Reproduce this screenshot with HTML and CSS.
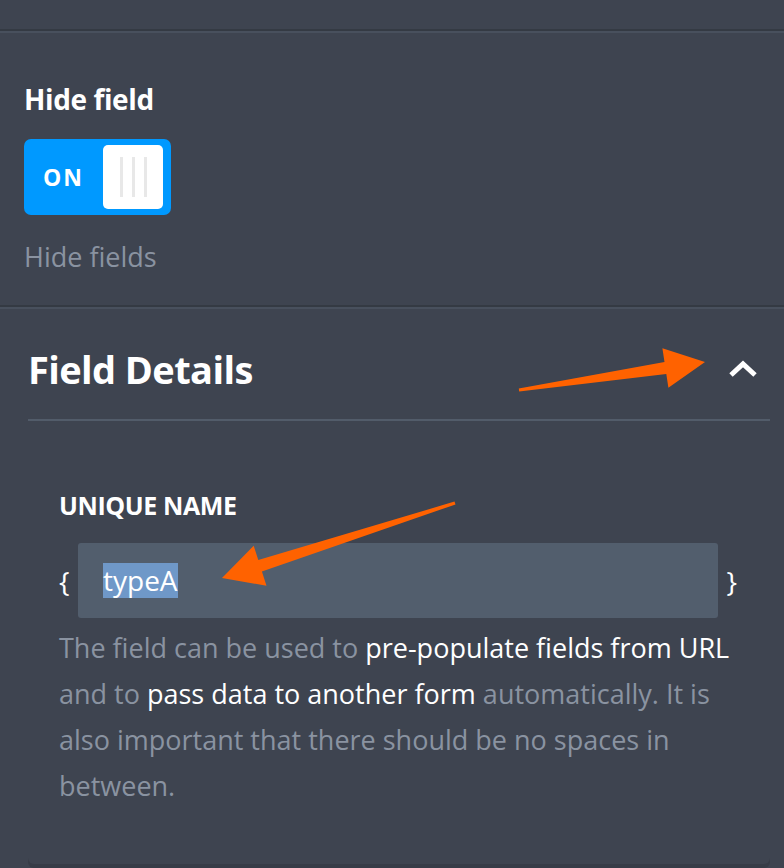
FILE: index.html
```html
<!DOCTYPE html>
<html lang="en">
<head>
    <meta charset="UTF-8">
    <meta name="viewport" content="width=device-width, initial-scale=1.0">
    <title>Field properties</title>
    <link rel="stylesheet" href="styles.css">
</head>
<body>
    <div class="top-strip"></div>
    <div class="divider"></div>

    <div class="section hide-section">
        <h3 class="section-label">Hide field</h3>
        <div class="toggle">
            <span class="toggle-text">ON</span>
            <span class="toggle-knob">
                <i></i><i></i><i></i>
            </span>
        </div>
        <p class="hint">Hide fields</p>
    </div>

    <div class="divider"></div>

    <div class="details">
        <div class="details-head">
            <h2>Field Details</h2>
            <svg class="chevron" width="34" height="22" viewBox="0 0 34 22">
                <polyline points="5,17 17,6 29,17" fill="none" stroke="#fff" stroke-width="5"/>
            </svg>
        </div>
        <div class="details-body">
            <label class="field-label" for="uniqueName">UNIQUE NAME</label>
            <div class="name-row">
                <span class="brace">{</span>
                <div class="name-input" id="uniqueName"><span class="selected">typeA</span></div>
                <span class="brace">}</span>
            </div>
            <p class="desc">
                The field can be used to <b>pre-populate fields from URL</b>
                and to <b>pass data to another form</b> automatically. It is
                also important that there should be no spaces in between.
            </p>
        </div>
    </div>

    <svg class="arrows" width="784" height="868" viewBox="0 0 784 868">
        <polygon fill="#ff6200" points="518.8,388.5 664.5,362.1 662.4,348.2 705,362 668.4,387.8 666.3,373.9 519.2,391.5"/>
        <polygon fill="#ff6200" points="454.5,501.6 258.3,560.1 253.7,545.8 222,578 266.5,585.8 261.9,571.5 455.5,504.4"/>
    </svg>
</body>
</html>
```

FILE: styles.css
```css
body {
    margin: 0;
    background-color: #3e4450;
    font-family: "Open Sans", Lato, Arial, sans-serif;
    color: #fff;
    position: relative;
    height: 868px;
    overflow: hidden;
}
.top-strip {
    height: 29px;
}
.divider {
    border-top: 2px solid #343a43;
    border-bottom: 2px solid #48505d;
}
.hide-section {
    padding: 49px 24px 31px;
}
.section-label {
    margin: 0;
    font-size: 28px;
    font-weight: 700;
    line-height: 34px;
    letter-spacing: -0.4px;
}
.toggle {
    margin-top: 23px;
    width: 147px;
    height: 76px;
    box-sizing: border-box;
    background-color: #0099ff;
    border-radius: 7px;
    display: flex;
    align-items: center;
    justify-content: space-between;
    padding: 6px 8px 6px 19px;
}
.toggle-text {
    font-size: 23px;
    font-weight: 700;
    letter-spacing: 2px;
}
.toggle-knob {
    width: 60px;
    height: 64px;
    background-color: #fff;
    border-radius: 5px;
    display: flex;
    justify-content: center;
    align-items: center;
    gap: 9px;
}
.toggle-knob i {
    width: 3px;
    height: 40px;
    background-color: #e8e8e8;
}
.hint {
    margin: 25px 0 0;
    font-size: 27px;
    line-height: 34px;
    color: #8a93a1;
}
.details {
    margin: 0 14px 0 28px;
    height: 555px;
    border-radius: 0 0 6px 6px;
    box-shadow: 0 4px 0 #373c47;
}
.details-head {
    height: 112px;
    box-sizing: border-box;
    padding: 10px 10px 0 0;
    display: flex;
    align-items: center;
    justify-content: space-between;
    border-bottom: 2px solid #525c6a;
}
.details-head h2 {
    margin: 0;
    font-size: 38px;
    font-weight: 700;
    letter-spacing: -0.6px;
}
.details-body {
    padding: 69px 30px 0 31px;
}
.field-label {
    display: block;
    font-size: 25px;
    line-height: 30px;
    font-weight: 700;
    letter-spacing: -0.4px;
}
.name-row {
    margin-top: 23px;
    display: flex;
    align-items: center;
    width: 678px;
}
.brace {
    font-size: 28px;
    width: 19px;
}
.brace:last-child {
    text-align: right;
}
.name-input {
    flex: 1;
    height: 75px;
    background-color: #525e6d;
    border-radius: 3px;
    display: flex;
    align-items: center;
    padding-left: 25px;
    font-size: 28px;
}
.selected {
    background-color: #6f98c8;
    line-height: 35px;
}
.desc {
    margin: 7px 0 0;
    max-width: 684px;
    font-size: 27px;
    line-height: 46px;
    color: #8a93a1;
}
.desc b {
    font-weight: 400;
    color: #fff;
}
.arrows {
    position: absolute;
    left: 0;
    top: 0;
    pointer-events: none;
}
```
